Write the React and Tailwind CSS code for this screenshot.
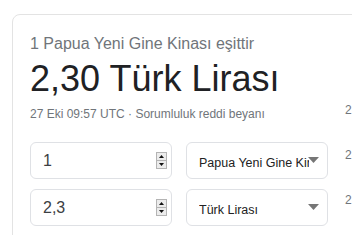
export default function App() {
  const font = { fontFamily: '"Liberation Sans", Arial, sans-serif' };
  const Spinner = () => (
    <svg width="11" height="17" viewBox="0 0 11 17" className="absolute right-[4px] top-[9px]">
      <rect x="0.5" y="0.5" width="10" height="16" fill="#ececec" stroke="#b4b4b4" />
      <line x1="1" y1="8.5" x2="10" y2="8.5" stroke="#b4b4b4" />
      <polygon points="3,6 8,6 5.5,3" fill="#111" />
      <polygon points="3,11 8,11 5.5,14" fill="#111" />
    </svg>
  );
  const Arrow = () => (
    <svg width="11" height="6" viewBox="0 0 11 6" className="absolute right-[8px] top-[14px]">
      <polygon points="0,0 11,0 5.5,6" fill="#767676" />
    </svg>
  );
  const NumInput = ({ value }) => (
    <div className="relative w-[142px] h-[37px] border border-[#dfe1e5] rounded-md flex items-center pl-[12px] text-[16px] text-[#3c4043]">
      {value}
      <Spinner />
    </div>
  );
  const Select = ({ label }) => (
    <div className="relative w-[142px] h-[37px] border border-[#dfe1e5] rounded-md flex items-center pt-[5px] pl-[12px] pr-[18px]">
      <span className="block overflow-hidden whitespace-nowrap text-[12.5px] leading-[16px] text-[#222]">{label}</span>
      <Arrow />
    </div>
  );
  return (
    <div className="w-[352px] h-[235px] overflow-hidden bg-white pl-[12px] pt-[14px]" style={font}>
      <div className="w-[420px] h-[260px] border border-[#e3e3e3] rounded-lg pl-[17px] pt-[19px] flex">
        <div className="w-[315px] shrink-0 flex flex-col">
          <div className="text-[16px] leading-[20px] text-[#70757a] whitespace-nowrap">1 Papua Yeni Gine Kinası eşittir</div>
          <div className="mt-[3px] text-[36px] leading-[44px] text-[#202124] whitespace-nowrap">2,30 Türk Lirası</div>
          <div className="mt-[5px] text-[12px] leading-[16px] text-[#70757a] whitespace-nowrap">27 Eki 09:57 UTC · Sorumluluk reddi beyanı</div>
          <div className="mt-[20px] flex flex-col gap-[10px]">
            <div className="flex gap-[14px]">
              <NumInput value="1" />
              <Select label="Papua Yeni Gine Kinası" />
            </div>
            <div className="flex gap-[14px]">
              <NumInput value="2,3" />
              <Select label="Türk Lirası" />
            </div>
          </div>
        </div>
        <div className="mt-[68px] flex flex-col gap-[29px] text-[12px] leading-[16px] text-[#70757a]">
          <span>2</span>
          <span>2</span>
          <span>2</span>
        </div>
      </div>
    </div>
  );
}
